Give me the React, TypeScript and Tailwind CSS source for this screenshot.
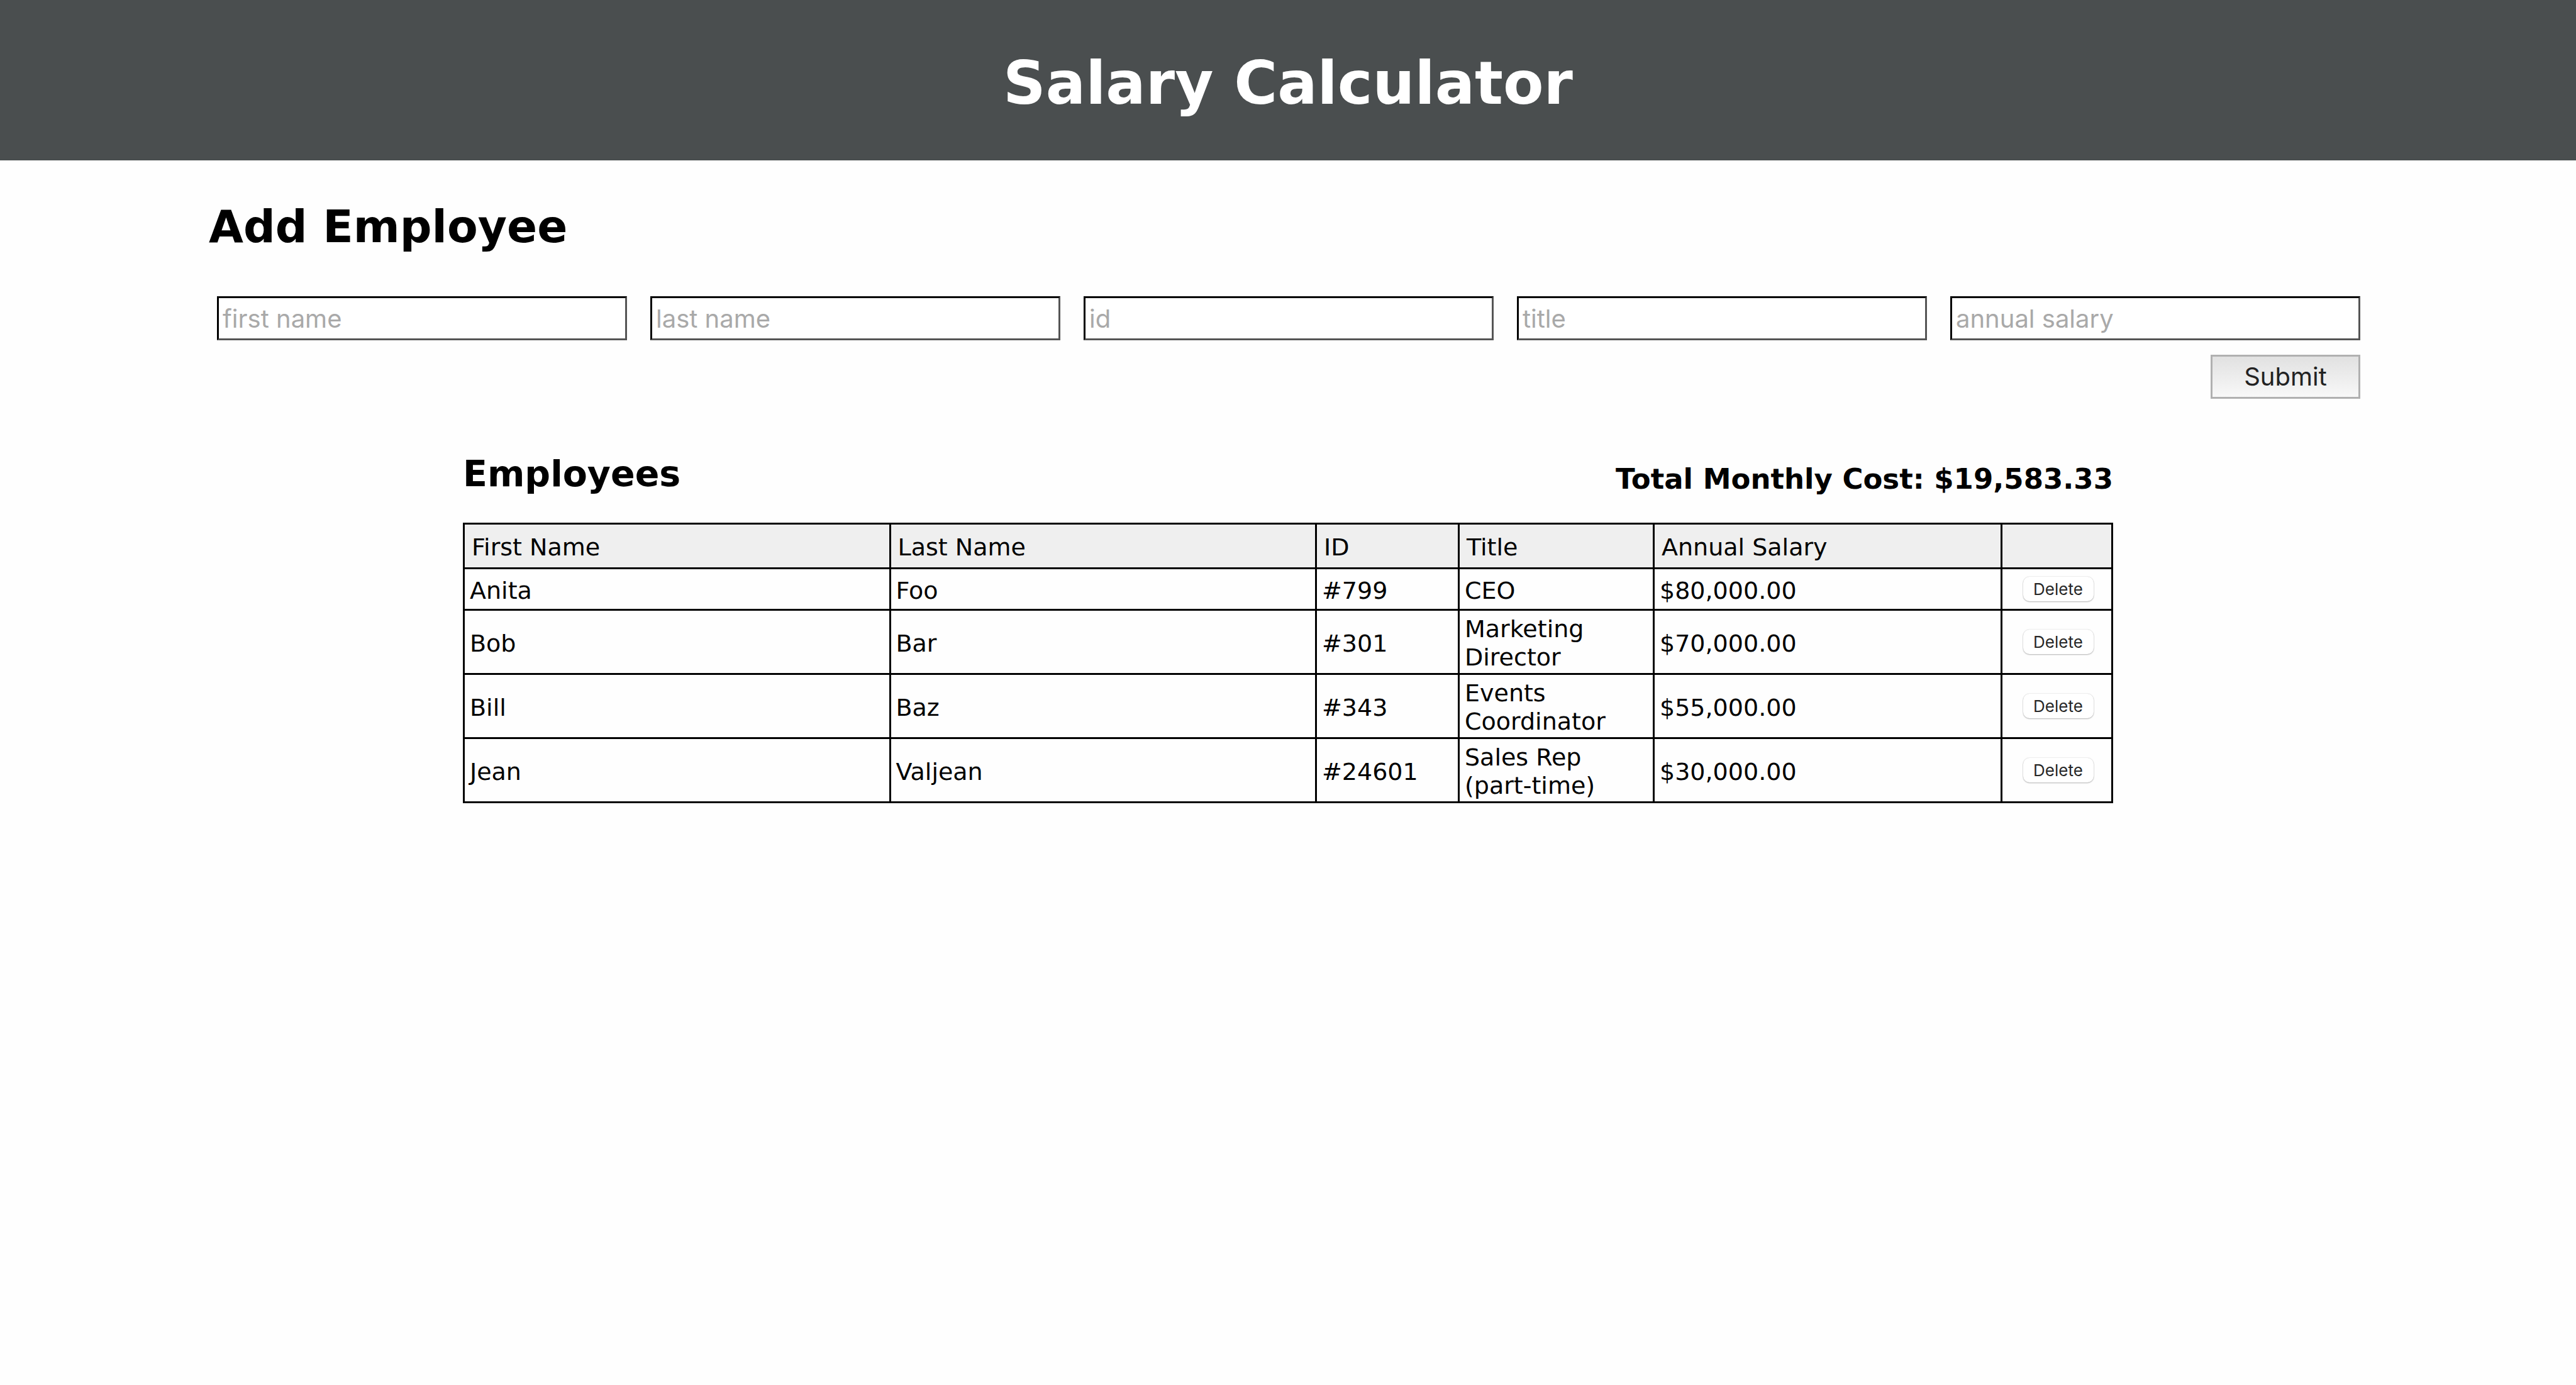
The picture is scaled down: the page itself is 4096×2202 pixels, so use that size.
import { useState } from "react";
import type { FormEvent } from "react";

type Employee = {
  firstName: string;
  lastName: string;
  id: string;
  title: string;
  salary: number;
};

type FieldName = "firstName" | "lastName" | "id" | "title" | "salary";

const initialEmployees: Employee[] = [
  { firstName: "Anita", lastName: "Foo", id: "799", title: "CEO", salary: 80000 },
  { firstName: "Bob", lastName: "Bar", id: "301", title: "Marketing Director", salary: 70000 },
  { firstName: "Bill", lastName: "Baz", id: "343", title: "Events Coordinator", salary: 55000 },
  { firstName: "Jean", lastName: "Valjean", id: "24601", title: "Sales Rep (part-time)", salary: 30000 },
];

const fields: { name: FieldName; label: string }[] = [
  { name: "firstName", label: "first name" },
  { name: "lastName", label: "last name" },
  { name: "id", label: "id" },
  { name: "title", label: "title" },
  { name: "salary", label: "annual salary" },
];

const columns = ["First Name", "Last Name", "ID", "Title", "Annual Salary", ""];

const money = (value: number) =>
  value.toLocaleString("en-US", { style: "currency", currency: "USD" });

function Header() {
  return (
    <header className="bg-[#4a4e4f] pt-[77px] pb-[66px] text-center text-white">
      <h1 className="text-[94px] leading-[112px] font-bold">Salary Calculator</h1>
    </header>
  );
}

function EmployeeForm({ onAdd }: { onAdd: (employee: Employee) => void }) {
  const submit = (event: FormEvent<HTMLFormElement>) => {
    event.preventDefault();
    const data = new FormData(event.currentTarget);
    onAdd({
      firstName: String(data.get("firstName")),
      lastName: String(data.get("lastName")),
      id: String(data.get("id")),
      title: String(data.get("title")),
      salary: Number(data.get("salary")) || 0,
    });
    event.currentTarget.reset();
  };

  return (
    <section className="px-[332px] pt-[62px]">
      <h2 className="text-[71px] leading-[88px] font-bold">Add Employee</h2>
      <form
        onSubmit={submit}
        className="mt-[66px] flex flex-col gap-[23px] pr-[11px] pl-[13px] font-['Inter',sans-serif] leading-[50px]"
      >
        <div className="grid grid-cols-5 gap-[37px]">
          {fields.map((field) => (
            <input
              key={field.name}
              name={field.name}
              aria-label={field.label}
              placeholder={field.label}
              className="h-[70px] w-full min-w-0 border-[3px] border-t-black border-r-[#555555] border-b-[#555555] border-l-black bg-white px-[6px] text-[40px] placeholder:text-[#a9a9a9]"
            />
          ))}
        </div>
        <button
          type="submit"
          className="h-[70px] w-[238px] self-end border-[3px] border-[#b0b0b0] bg-linear-to-b from-[#e1e1e1] to-[#f8f8f8] text-[40px] text-[#222222]"
        >
          Submit
        </button>
      </form>
    </section>
  );
}

function EmployeeTable({
  employees,
  onDelete,
}: {
  employees: Employee[];
  onDelete: (id: string) => void;
}) {
  const total = employees.reduce((sum, employee) => sum + employee.salary, 0) / 12;
  const cell = "border-[3px] border-black px-2 pt-[7px] pb-[2px]";

  return (
    <section className="px-[736px] pt-[85px]">
      <div className="flex items-end justify-between">
        <h2 className="text-[57px] leading-[68px] font-bold">Employees</h2>
        <p className="text-[45px] leading-[50px] font-bold">Total Monthly Cost: {money(total)}</p>
      </div>
      <table className="mt-11 w-full table-fixed border-collapse text-left text-[38px] leading-[45px]">
        <colgroup>
          <col />
          <col />
          <col className="w-[227px]" />
          <col className="w-[310px]" />
          <col className="w-[553px]" />
          <col className="w-[176px]" />
        </colgroup>
        <thead className="bg-[#efefef]">
          <tr>
            {columns.map((column) => (
              <th
                key={column}
                scope="col"
                className="border-[3px] border-black px-[11px] pt-[14px] pb-[9px] font-normal"
              >
                {column}
              </th>
            ))}
          </tr>
        </thead>
        <tbody>
          {employees.map((employee) => (
            <tr key={employee.id} className="h-[66px]">
              <td className={cell}>{employee.firstName}</td>
              <td className={cell}>{employee.lastName}</td>
              <td className={cell}>#{employee.id}</td>
              <td className={cell}>{employee.title}</td>
              <td className={cell}>{money(employee.salary)}</td>
              <td className="border-[3px] border-black pl-1">
                <button
                  type="button"
                  onClick={() => onDelete(employee.id)}
                  className="mx-auto block h-[39px] w-[112px] rounded-[10px] bg-white font-['Inter',sans-serif] text-[26px] leading-[39px] text-[#272727] shadow-[0_0_2px_rgba(0,0,0,0.2),0_1px_2px_rgba(0,0,0,0.25)]"
                >
                  Delete
                </button>
              </td>
            </tr>
          ))}
        </tbody>
      </table>
    </section>
  );
}

export default function App() {
  const [employees, setEmployees] = useState(initialEmployees);

  return (
    <div className="min-h-screen bg-[#fefefe] font-['DejaVu_Sans',sans-serif] text-black">
      <Header />
      <main>
        <EmployeeForm onAdd={(employee) => setEmployees([...employees, employee])} />
        <EmployeeTable
          employees={employees}
          onDelete={(id) => setEmployees(employees.filter((employee) => employee.id !== id))}
        />
      </main>
    </div>
  );
}
